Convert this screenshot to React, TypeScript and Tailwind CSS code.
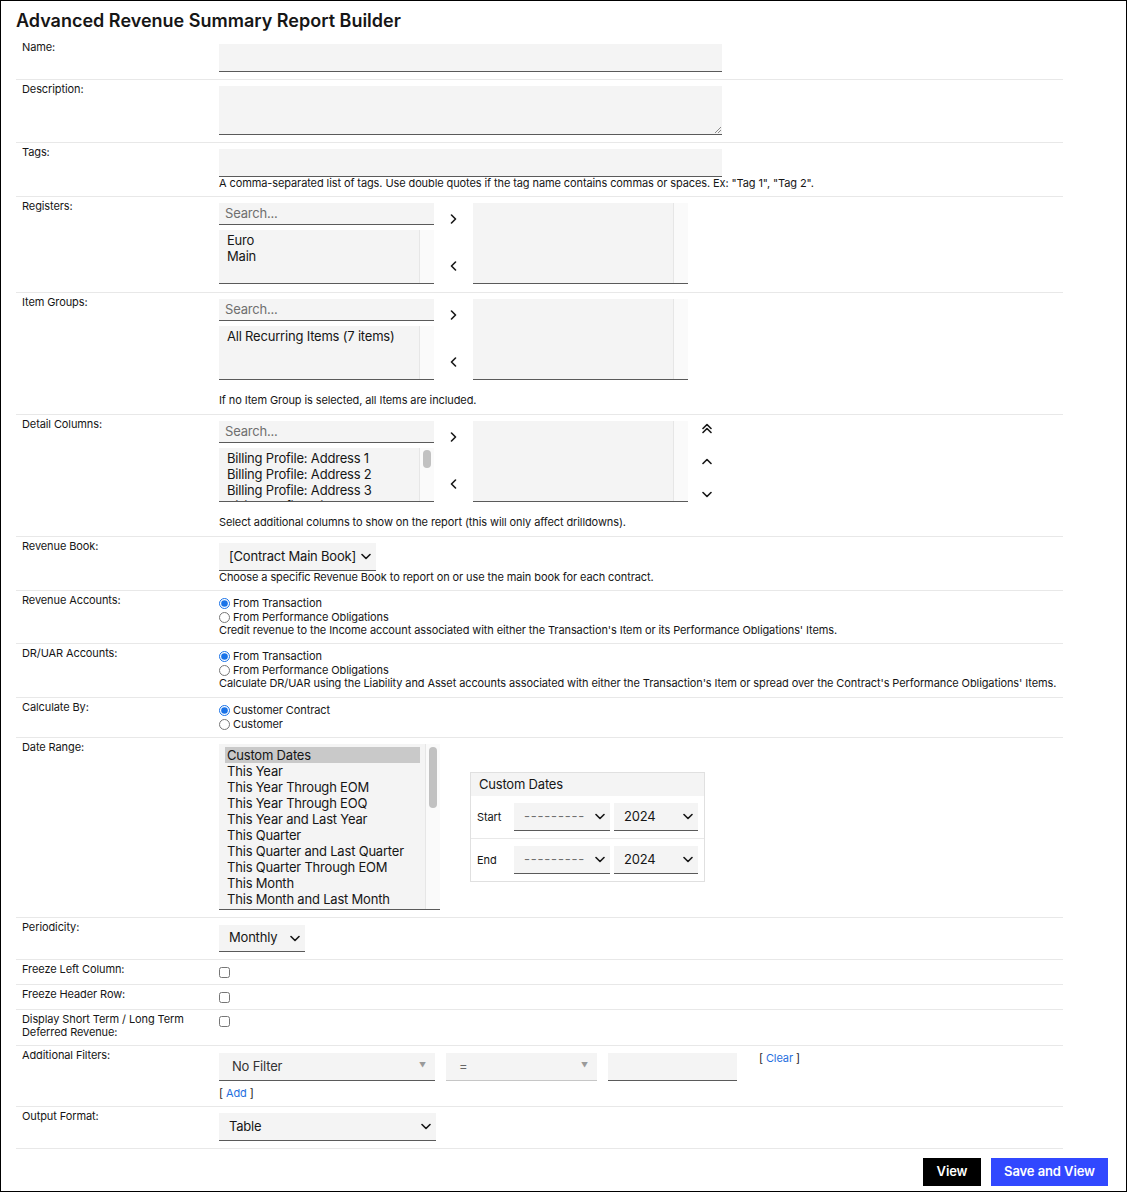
import React from 'react';

const line = 'border-b border-[#e8e8e8]';
const field = 'bg-[#f4f4f4] border-b border-[#5a5a5a]';

function Row({
  label,
  children,
  className = '',
  labelClassName = '',
}: {
  label: React.ReactNode;
  children?: React.ReactNode;
  className?: string;
  labelClassName?: string;
}) {
  return (
    <div className={`flex ${line}`}>
      <div className={`w-[197px] shrink-0 pl-[6px] pt-[3px] text-[11px] leading-[13px] ${labelClassName}`}>{label}</div>
      <div className={`flex-1 pl-[6px] ${className}`}>{children}</div>
    </div>
  );
}

function Chevron({ dir = 'down', className = '' }: { dir?: 'down' | 'up' | 'left' | 'right'; className?: string }) {
  const d = {
    down: 'M1 1.5l4 4 4-4',
    up: 'M1 5.5l4-4 4 4',
    right: 'M1.5 1l4 4-4 4',
    left: 'M5.5 1l-4 4 4 4',
  }[dir];
  const vertical = dir === 'down' || dir === 'up';
  return (
    <svg
      width={vertical ? 10 : 7}
      height={vertical ? 7 : 10}
      viewBox={vertical ? '0 0 10 7' : '0 0 7 10'}
      className={`shrink-0 ${className}`}
      fill="none"
      stroke="#161616"
      strokeWidth="1.6"
      strokeLinecap="round"
      strokeLinejoin="round"
    >
      <path d={d} />
    </svg>
  );
}

function DoubleUp() {
  return (
    <svg width="10" height="11" viewBox="0 0 10 11" fill="none" stroke="#161616" strokeWidth="1.6" strokeLinecap="round" strokeLinejoin="round">
      <path d="M1 5.5l4-4 4 4" />
      <path d="M1 9.5l4-4 4 4" />
    </svg>
  );
}

function Select({ value, width, muted = false }: { value: string; width: string; muted?: boolean }) {
  return (
    <div className={`flex h-[28px] items-center justify-between pl-[10px] pr-[5px] text-[13px] tracking-[-0.2px] ${field} ${width}`}>
      <span className={muted ? 'text-[#6f6f6f] tracking-[0.8px]' : ''}>{value}</span>
      <Chevron />
    </div>
  );
}

function Search() {
  return (
    <div className={`h-[22px] pl-[6px] text-[13px] leading-[21px] tracking-[-0.2px] text-[#6f6f6f] ${field}`}>Search...</div>
  );
}

function ListBox({ items, height, thumb = false }: { items: string[]; height: string; thumb?: boolean }) {
  return (
    <div className={`flex overflow-hidden ${field} ${height}`}>
      <div className="flex-1 overflow-hidden pl-[8px] pt-[2px] text-[13px] leading-[16px] tracking-[-0.2px]">
        {items.map((it) => (
          <div key={it} className="whitespace-nowrap">
            {it}
          </div>
        ))}
      </div>
      <div className="w-[15px] shrink-0 border-l border-[#e6e6e6] bg-[#fafafa] pt-[2px] pl-[3px]">
        {thumb && <div className="h-[18px] w-[8px] rounded-full bg-[#c1c1c1]" />}
      </div>
    </div>
  );
}

function DualList({ items, thumb = false, reorder = false }: { items: string[]; thumb?: boolean; reorder?: boolean }) {
  return (
    <div className="flex">
      <div className="w-[215px]">
        <Search />
        <div className="mt-[5px]">
          <ListBox items={items} height="h-[54px]" thumb={thumb} />
        </div>
      </div>
      <div className="flex w-[39px] flex-col items-center pt-[11px]">
        <Chevron dir="right" />
        <div className="mt-[37px]">
          <Chevron dir="left" />
        </div>
      </div>
      <div className="w-[215px]">
        <ListBox items={[]} height="h-[81px]" />
      </div>
      {reorder && (
        <div className="flex w-[38px] flex-col items-center pt-[2px]">
          <DoubleUp />
          <div className="mt-[24px]">
            <Chevron dir="up" />
          </div>
          <div className="mt-[26px]">
            <Chevron dir="down" />
          </div>
        </div>
      )}
    </div>
  );
}

function Radio({ label, checked = false }: { label: string; checked?: boolean }) {
  return (
    <label className="flex h-[14px] items-center gap-[3px] text-[11px] leading-[13px]">
      <input type="radio" defaultChecked={checked} className="m-0 h-[11px] w-[11px] accent-[#1a73e8]" />
      <span>{label}</span>
    </label>
  );
}

function Check() {
  return <input type="checkbox" className="m-0 block h-[11px] w-[11px]" />;
}

function Help({ children, className = '' }: { children: React.ReactNode; className?: string }) {
  return <div className={`whitespace-nowrap text-[11px] leading-[13px] ${className}`}>{children}</div>;
}

function FilterSelect({ value, width, disabled = false }: { value: string; width: string; disabled?: boolean }) {
  return (
    <div
      className={`flex h-[28px] items-center justify-between bg-[#f4f4f4] pl-[13px] pr-[9px] text-[13px] tracking-[-0.2px] ${
        disabled ? 'border-b border-[#c6c6c6] text-[#666]' : 'border-b border-[#5a5a5a] text-[#333]'
      } ${width}`}
    >
      <span>{value}</span>
      <span className="text-[7px] text-[#9a9a9a]">▼</span>
    </div>
  );
}

const dateRanges = [
  'Custom Dates',
  'This Year',
  'This Year Through EOM',
  'This Year Through EOQ',
  'This Year and Last Year',
  'This Quarter',
  'This Quarter and Last Quarter',
  'This Quarter Through EOM',
  'This Month',
  'This Month and Last Month',
];

export default function App() {
  return (
    <div className="h-[1192px] overflow-hidden border border-black bg-white font-['Inter','Noto_Sans',sans-serif] tracking-[-0.1px] text-[#161616]">
      <div className="h-[37px] pl-[15px] pt-[9px] text-[18px] font-semibold leading-[22px] tracking-normal">
        Advanced Revenue Summary Report Builder
      </div>

      <div className="ml-[15px] w-[1047px]">
        <Row label="Name:" className="pt-[6px] pb-[7px]">
          <div className={`h-[28px] w-[503px] ${field}`} />
        </Row>

        <Row label="Description:" className="pt-[6px] pb-[7px]">
          <div className={`relative h-[49px] w-[503px] ${field}`}>
            <svg width="7" height="7" viewBox="0 0 7 7" className="absolute bottom-[1px] right-[1px]" stroke="#8a8a8a" strokeWidth="1">
              <path d="M1 7L7 1M4 7L7 4" />
            </svg>
          </div>
        </Row>

        <Row label="Tags:" className="pt-[6px] pb-[6px]">
          <div className={`h-[28px] w-[503px] ${field}`} />
          <Help>A comma-separated list of tags. Use double quotes if the tag name contains commas or spaces. Ex: "Tag 1", "Tag 2".</Help>
        </Row>

        <Row label="Registers:" className="pt-[6px] pb-[8px]">
          <DualList items={['Euro', 'Main']} />
        </Row>

        <Row label="Item Groups:" className="pt-[6px] pb-[7px]">
          <DualList items={['All Recurring Items (7 items)']} />
          <Help className="mt-[14px]">If no Item Group is selected, all Items are included.</Help>
        </Row>

        <Row label="Detail Columns:" className="pt-[6px] pb-[7px]">
          <DualList
            items={['Billing Profile: Address 1', 'Billing Profile: Address 2', 'Billing Profile: Address 3', 'Billing Profile: City']}
            thumb
            reorder
          />
          <Help className="mt-[14px]">Select additional columns to show on the report (this will only affect drilldowns).</Help>
        </Row>

        <Row label="Revenue Book:" className="pt-[6px] pb-[6px]">
          <Select value="[Contract Main Book]" width="w-[157px]" />
          <Help>Choose a specific Revenue Book to report on or use the main book for each contract.</Help>
        </Row>

        <Row label="Revenue Accounts:" className="pt-[5px] pb-[6px]">
          <Radio label="From Transaction" checked />
          <Radio label="From Performance Obligations" />
          <Help>Credit revenue to the Income account associated with either the Transaction's Item or its Performance Obligations' Items.</Help>
        </Row>

        <Row label="DR/UAR Accounts:" className="pt-[5px] pb-[7px]">
          <Radio label="From Transaction" checked />
          <Radio label="From Performance Obligations" />
          <Help>
            Calculate DR/UAR using the Liability and Asset accounts associated with either the Transaction's Item or spread over the Contract's Performance Obligations' Items.
          </Help>
        </Row>

        <Row label="Calculate By:" className="pt-[5px] pb-[6px]">
          <Radio label="Customer Contract" checked />
          <Radio label="Customer" />
        </Row>

        <Row label="Date Range:" className="pt-[6px] pb-[7px]">
          <div className="flex items-center">
            <div className={`flex h-[166px] w-[221px] overflow-hidden ${field}`}>
              <div className="flex-1 overflow-hidden pl-[6px] pr-[5px] pt-[3px] text-[13px] leading-[16px] tracking-[-0.2px]">
                {dateRanges.map((d, i) => (
                  <div key={d} className={`whitespace-nowrap pl-[2px] ${i === 0 ? 'bg-[#c9c9c9]' : ''}`}>
                    {d}
                  </div>
                ))}
              </div>
              <div className="w-[15px] shrink-0 border-l border-[#e6e6e6] bg-[#fafafa] pl-[3px] pt-[3px]">
                <div className="h-[61px] w-[8px] rounded-full bg-[#c1c1c1]" />
              </div>
            </div>

            <div className="ml-[30px] w-[235px] border border-[#e0e0e0]">
              <div className="h-[23px] bg-[#f4f4f4] pl-[8px] text-[13px] leading-[23px] tracking-[-0.2px]">Custom Dates</div>
              <div className="flex h-[43px] items-center border-b border-[#e8e8e8] px-[6px]">
                <div className="w-[37px] text-[11px]">Start</div>
                <Select value="---------" width="w-[96px]" muted />
                <div className="ml-[4px]">
                  <Select value="2024" width="w-[84px]" />
                </div>
              </div>
              <div className="flex h-[42px] items-center px-[6px]">
                <div className="w-[37px] text-[11px]">End</div>
                <Select value="---------" width="w-[96px]" muted />
                <div className="ml-[4px]">
                  <Select value="2024" width="w-[84px]" />
                </div>
              </div>
            </div>
          </div>
        </Row>

        <Row label="Periodicity:" className="pt-[7px] pb-[7px]">
          <div className={`flex h-[27px] w-[86px] items-center justify-between pl-[10px] pr-[5px] text-[13px] tracking-[-0.2px] ${field}`}>
            <span>Monthly</span>
            <Chevron />
          </div>
        </Row>

        <Row label="Freeze Left Column:" className="pt-[7px] pb-[6px]">
          <Check />
        </Row>

        <Row label="Freeze Header Row:" className="pt-[7px] pb-[6px]">
          <Check />
        </Row>

        <Row label={<>Display Short Term / Long Term<br />Deferred Revenue:</>} labelClassName="pb-[6px]" className="pt-[6px]">
          <Check />
        </Row>

        <Row label="Additional Filters:" className="pt-[7px] pb-[6px]">
          <div className="flex items-start">
            <FilterSelect value="No Filter" width="w-[216px]" />
            <div className="ml-[11px]">
              <FilterSelect value="=" width="w-[151px]" disabled />
            </div>
            <div className={`ml-[11px] h-[28px] w-[129px] ${field}`} />
            <div className="ml-[22px] -mt-[1px] text-[11px] leading-[13px]">
              [ <span className="text-[#1f6fe0]">Clear</span> ]
            </div>
          </div>
          <div className="mt-[6px] text-[11px] leading-[13px]">
            [ <span className="text-[#1f6fe0]">Add</span> ]
          </div>
        </Row>

        <Row label="Output Format:" className="pt-[6px] pb-[7px]">
          <Select value="Table" width="w-[217px]" />
        </Row>
      </div>

      <div className="mt-[9px] flex justify-end gap-[10px] pr-[18px]">
        <button className="h-[28px] w-[58px] bg-black text-[13px] font-semibold text-white">View</button>
        <button className="h-[28px] w-[117px] bg-[#3148ff] text-[13px] font-semibold text-white">Save and View</button>
      </div>
    </div>
  );
}
